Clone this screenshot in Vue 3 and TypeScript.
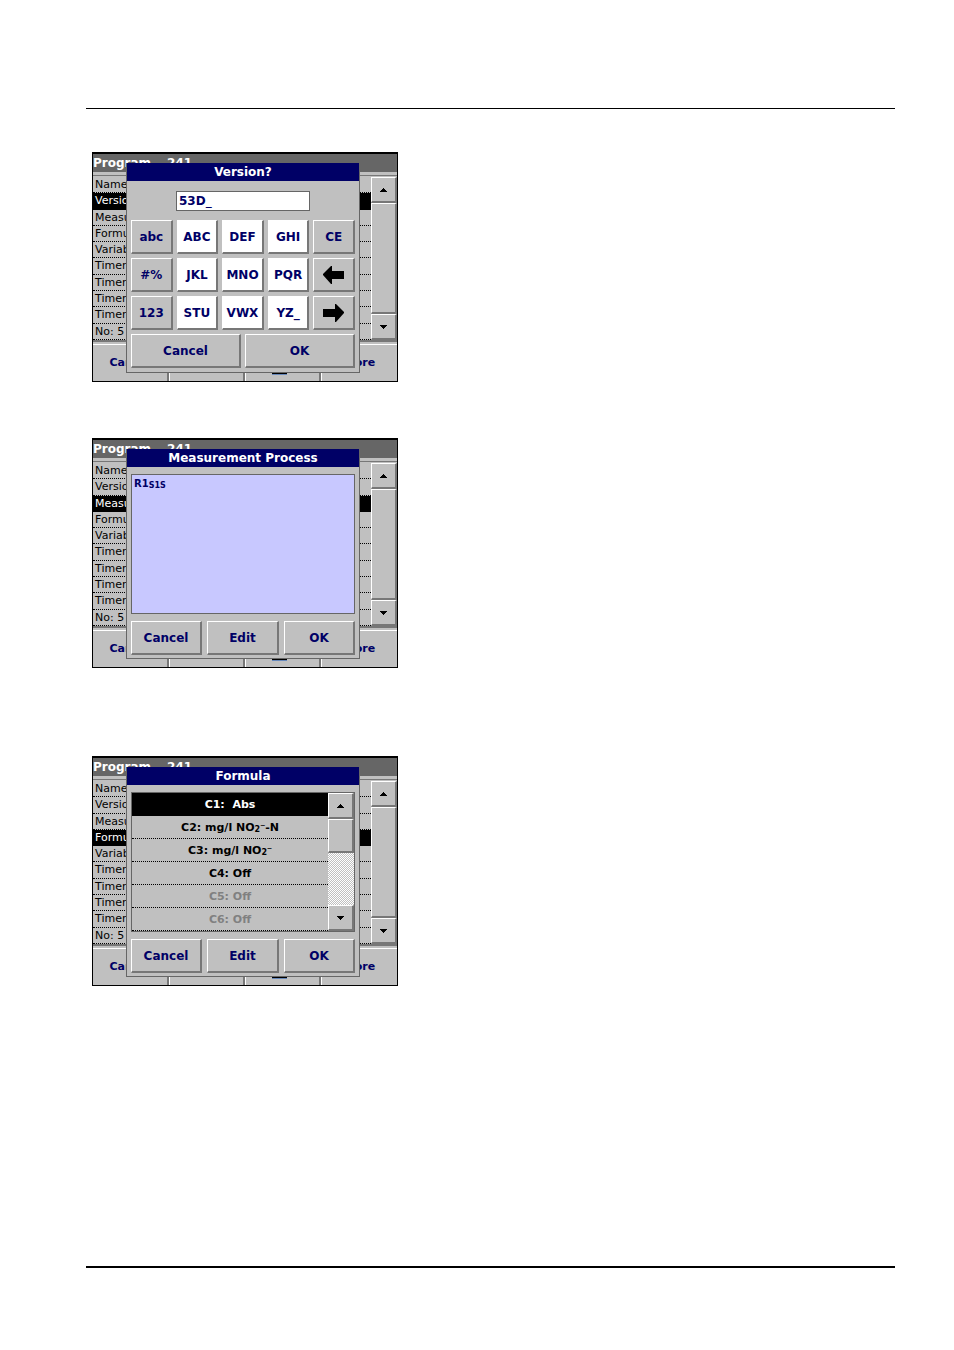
<script setup lang="ts">
interface Panel {
  kind: 'keypad' | 'process' | 'formula'
  title: string
  selected: number
}

const panels: Panel[] = [
  { kind: 'keypad', title: 'Version?', selected: 1 },
  { kind: 'process', title: 'Measurement Process', selected: 2 },
  { kind: 'formula', title: 'Formula', selected: 3 },
]

const settings: string[] = [
  'Name', 'Version', 'Measure', 'Formula', 'Variable',
  'Timer', 'Timer', 'Timer', 'Timer', 'No: 5',
]

interface Key {
  label: string
  tone: 'grey' | 'white'
  arrow?: 'left' | 'right'
}

const keys: Key[] = [
  { label: 'abc', tone: 'grey' },
  { label: 'ABC', tone: 'white' },
  { label: 'DEF', tone: 'white' },
  { label: 'GHI', tone: 'white' },
  { label: 'CE', tone: 'grey' },
  { label: '#%', tone: 'grey' },
  { label: 'JKL', tone: 'white' },
  { label: 'MNO', tone: 'white' },
  { label: 'PQR', tone: 'white' },
  { label: 'Back', tone: 'grey', arrow: 'left' },
  { label: '123', tone: 'grey' },
  { label: 'STU', tone: 'white' },
  { label: 'VWX', tone: 'white' },
  { label: 'YZ_', tone: 'white' },
  { label: 'Forward', tone: 'grey', arrow: 'right' },
]
</script>

<template>
  <main class="page">
    <section v-for="panel in panels" :key="panel.kind" class="screen" :class="'screen-' + panel.kind">
      <header class="screen-title"><span>Program</span><span>241</span></header>
      <div class="screen-body">
        <ul class="settings">
          <li v-for="(name, i) in settings" :key="i" :class="{ active: i === panel.selected }">{{ name }}</li>
        </ul>
        <div class="scroll">
          <button class="raised" type="button" aria-label="Scroll up">
            <svg width="7" height="4" viewBox="0 0 7 4"><path d="M3 0h1v1h1v1h1v1h1v1H0V3h1V2h1V1h1z" /></svg>
          </button>
          <div class="thumb raised"></div>
          <button class="raised" type="button" aria-label="Scroll down">
            <svg width="7" height="4" viewBox="0 0 7 4"><path d="M0 0h7v1H6v1H5v1H4v1H3V3H2V2H1V1H0z" /></svg>
          </button>
        </div>
      </div>
      <footer class="softkeys">
        <button type="button">Cancel</button>
        <button type="button" aria-label="Function"></button>
        <button type="button" aria-label="Save"><span class="disk"></span></button>
        <button type="button">More</button>
      </footer>

      <div class="dialog" role="dialog" :aria-label="panel.title">
        <h2>{{ panel.title }}</h2>

        <div v-if="panel.kind === 'keypad'" class="dialog-body keypad-body">
          <input class="entry" type="text" value="53D_" aria-label="Version" />
          <div class="keys">
            <button v-for="key in keys" :key="key.label" type="button" class="raised key" :class="key.tone" :aria-label="key.label">
              <svg v-if="key.arrow" :class="key.arrow" width="21" height="18" viewBox="0 0 21 18">
                <path d="M0 5h12V0h1l8 8v1l-8 9h-1v-5H0z" />
              </svg>
              <template v-else>{{ key.label }}</template>
            </button>
          </div>
          <div class="actions two">
            <button class="raised" type="button">Cancel</button>
            <button class="raised" type="button">OK</button>
          </div>
        </div>

        <div v-else class="dialog-body">
          <div v-if="panel.kind === 'process'" class="process">R1<small>S1S</small></div>
          <div v-else class="formula">
            <ul>
              <li class="active">C1:&nbsp; Abs</li>
              <li>C2: mg/l NO<small>2</small><span class="minus">–</span>-N</li>
              <li>C3: mg/l NO<small>2</small><span class="minus">–</span></li>
              <li>C4: Off</li>
              <li class="off">C5: Off</li>
              <li class="off">C6: Off</li>
            </ul>
            <div class="scroll inner">
              <button class="raised" type="button" aria-label="Scroll up">
                <svg width="7" height="4" viewBox="0 0 7 4"><path d="M3 0h1v1h1v1h1v1h1v1H0V3h1V2h1V1h1z" /></svg>
              </button>
              <div class="thumb raised"></div>
              <div class="track"></div>
              <button class="raised" type="button" aria-label="Scroll down">
                <svg width="7" height="4" viewBox="0 0 7 4"><path d="M0 0h7v1H6v1H5v1H4v1H3V3H2V2H1V1H0z" /></svg>
              </button>
            </div>
          </div>
          <div class="actions three">
            <button class="raised" type="button">Cancel</button>
            <button class="raised" type="button">Edit</button>
            <button class="raised" type="button">OK</button>
          </div>
        </div>
      </div>
    </section>
  </main>
</template>

<style>
body {
  background: #fff;
}
</style>

<style scoped>
* {
  box-sizing: border-box;
}

.page {
  margin: 108px 59px 0 86px;
  padding: 43px 6px 280px;
  border-top: 1px solid #000;
  border-bottom: 2px solid #000;
  font-family: "DejaVu Sans", Verdana, sans-serif;
}

button {
  margin: 0;
  padding: 0;
  border: 0;
  border-radius: 0;
  background: #c0c0c0;
  color: #000066;
  font: bold 12px/14px "DejaVu Sans", Verdana, sans-serif;
  display: flex;
  align-items: center;
  justify-content: center;
}

ul {
  margin: 0;
  padding: 0;
  list-style: none;
}

svg {
  display: block;
  fill: #000;
}

.raised {
  border: 1px solid #fff;
  border-right: 2px solid #777;
  border-bottom: 2px solid #777;
}

.screen {
  position: relative;
  display: flex;
  flex-direction: column;
  width: 306px;
  height: 230px;
  border: 1px solid #000;
  border-top-width: 2px;
  background: #c0c0c0;
}

.screen-process {
  margin-top: 56px;
}

.screen-formula {
  margin-top: 88px;
}

.screen-title {
  display: flex;
  gap: 16px;
  height: 18px;
  background: #666;
  color: #fff;
  font-weight: bold;
  font-size: 12px;
  line-height: 18px;
}

.screen-body {
  display: flex;
  height: 170px;
  padding-top: 5px;
  border-bottom: 2px solid #777;
}

.screen-body::before {
  content: "";
  position: absolute;
  left: 0;
  right: 0;
  top: 21px;
  height: 1px;
  background: #777;
}

.settings {
  flex: 1;
  display: grid;
  grid-template-rows: repeat(10, 1fr);
}

.settings li {
  padding-left: 2px;
  border-bottom: 1px dotted #000;
  font-size: 11px;
  line-height: 16px;
  min-height: 0;
}

.settings li.active {
  background: #000;
  color: #fff;
}

.scroll {
  display: flex;
  flex-direction: column;
  width: 26px;
}

.scroll button {
  height: 26px;
  flex: none;
}

.scroll .thumb {
  flex: 1;
}

.softkeys {
  flex: 1;
  display: grid;
  grid-template-columns: repeat(4, 1fr);
  padding-top: 2px;
}

.softkeys button {
  border-top: 1px solid #fff;
  border-left: 1px solid #fff;
  border-right: 2px solid #777;
  font-size: 11px;
}

.softkeys button:first-child {
  border-left: 0;
}

.softkeys button:last-child {
  border-right: 0;
}

.softkeys .disk {
  align-self: flex-end;
  width: 15px;
  height: 12px;
  margin-bottom: 6px;
  margin-right: 6px;
  background: #000;
  border-bottom: 1px solid #6688bb;
}

.dialog {
  position: absolute;
  left: 33px;
  top: 9px;
  width: 234px;
  height: 210px;
  display: flex;
  flex-direction: column;
  background: #c0c0c0;
  border: 1px solid #666;
  border-top: 0;
}

.dialog h2 {
  margin: 0;
  height: 18px;
  background: #000066;
  color: #fff;
  text-align: center;
  font-size: 12px;
  line-height: 18px;
}

.dialog-body {
  flex: 1;
  display: flex;
  flex-direction: column;
  padding: 7px 4px 3px;
}

.keypad-body {
  padding-top: 10px;
}

.entry {
  align-self: center;
  width: 134px;
  height: 20px;
  margin: 0;
  padding: 0 2px;
  border: 1px solid #666;
  border-radius: 0;
  background: #fff;
  color: #000066;
  font: bold 12px/18px "DejaVu Sans", Verdana, sans-serif;
}

.keys {
  display: grid;
  grid-template-columns: repeat(5, 1fr);
  column-gap: 4px;
  row-gap: 4px;
  margin-top: 9px;
}

.key {
  height: 34px;
}

.key.white {
  background: #fff;
}

.left {
  transform: scaleX(-1);
}

.actions {
  display: grid;
  gap: 4px;
}

.actions button {
  height: 34px;
}

.two {
  grid-template-columns: 110px 1fr;
  margin-top: 4px;
}

.three {
  grid-template-columns: 71px 1fr 71px;
  column-gap: 5px;
  margin-top: 7px;
}

.process,
.formula {
  height: 140px;
  border: 1px solid #666;
}

.process {
  padding: 3px 2px;
  background: #c8c8ff;
  color: #000066;
  font-size: 10px;
  line-height: 12px;
  font-weight: bold;
}

small {
  font-size: 8px;
  line-height: 1;
  vertical-align: -1px;
}

.formula {
  display: flex;
}

.formula ul {
  flex: 1;
  display: grid;
  grid-template-rows: repeat(6, 1fr);
}

.formula li {
  border-bottom: 1px dotted #000;
  text-align: center;
  font-size: 11px;
  line-height: 24px;
  min-height: 0;
  font-weight: bold;
}

.formula li.active {
  background: #000;
  color: #fff;
}

.formula li.off {
  color: #808080;
}

.minus {
  font-size: 10px;
  line-height: 1;
  vertical-align: 3px;
  font-weight: normal;
}

.inner .thumb {
  flex: none;
  height: 34px;
}

.inner .track {
  flex: 1;
  background: repeating-conic-gradient(#fff 0 25%, #c0c0c0 0 50%) 0 0 / 2px 2px;
}
</style>
